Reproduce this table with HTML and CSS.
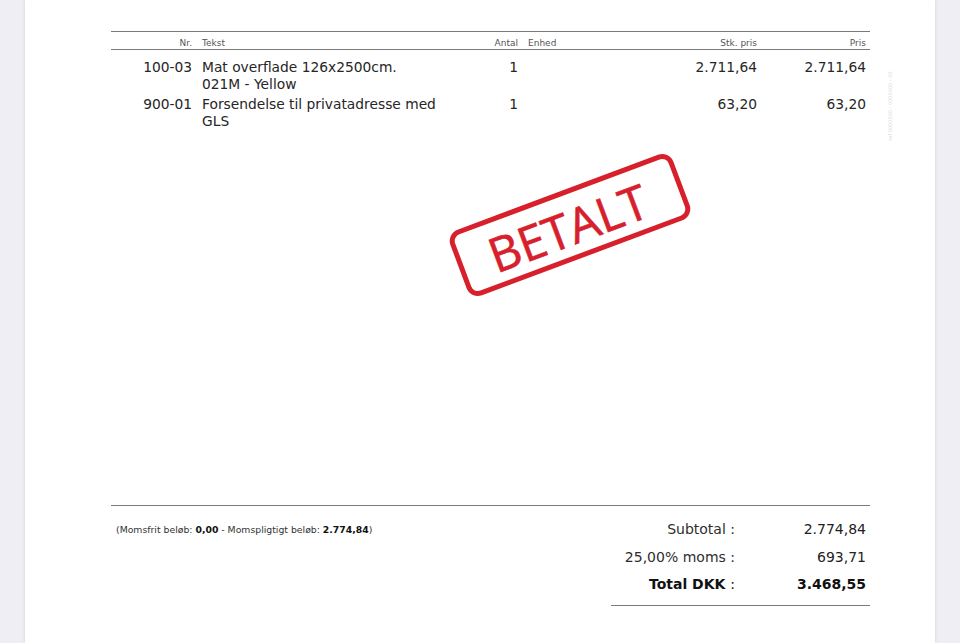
FILE: index.html
```html
<!DOCTYPE html>
<html lang="da">
<head>
<meta charset="utf-8">
<title>Faktura</title>
<link rel="stylesheet" href="styles.css">
</head>
<body>
<div class="page">
  <div class="items">
    <div class="row head">
      <div class="c-nr">Nr.</div>
      <div class="c-text">Tekst</div>
      <div class="c-qty">Antal</div>
      <div class="c-unit">Enhed</div>
      <div class="c-price">Stk. pris</div>
      <div class="c-total">Pris</div>
    </div>
    <div class="row item">
      <div class="c-nr">100-03</div>
      <div class="c-text">Mat overflade 126x2500cm.<br>021M - Yellow</div>
      <div class="c-qty">1</div>
      <div class="c-unit"></div>
      <div class="c-price">2.711,64</div>
      <div class="c-total">2.711,64</div>
    </div>
    <div class="row item">
      <div class="c-nr">900-01</div>
      <div class="c-text">Forsendelse til privatadresse med<br>GLS</div>
      <div class="c-qty">1</div>
      <div class="c-unit"></div>
      <div class="c-price">63,20</div>
      <div class="c-total">63,20</div>
    </div>
  </div>

  <div class="summary">
    <div class="note">(Momsfrit beløb: <b>0,00</b> - Momspligtigt beløb: <b>2.774,84</b>)</div>
    <div class="totals">
      <div class="t-label">Subtotal :</div><div class="t-value">2.774,84</div>
      <div class="t-label">25,00% moms :</div><div class="t-value">693,71</div>
      <div class="t-label strong">Total DKK <span class="colon">:</span></div><div class="t-value strong">3.468,55</div>
    </div>
  </div>

  <div class="stamp"><span>BETALT</span></div>
  <div class="sidecode">ref 0000000 - 0000000 - 00</div>
</div>
</body>
</html>
```

FILE: styles.css
```css
* { box-sizing: border-box; }

html, body {
  margin: 0;
  padding: 0;
  height: 643px;
  overflow: hidden;
}

body {
  background: #efeef4;
  font-family: "DejaVu Sans", Verdana, sans-serif;
  color: #262626;
}

.page {
  position: relative;
  margin: 0 25px;
  height: 643px;
  background: #ffffff;
  box-shadow: 0 0 3px rgba(0, 0, 0, 0.12);
  padding: 31px 65px 37px 86px;
  display: flex;
  flex-direction: column;
}

.items {
  border-top: 1px solid #7a7a7a;
}

.row {
  display: grid;
  grid-template-columns: 81px 278px 48px 132px 107px 109px;
  padding-right: 4px;
}

.head {
  font-size: 9px;
  color: #555;
  height: 18px;
  padding-top: 4px;
  line-height: 14px;
  border-bottom: 1px solid #7a7a7a;
}

.item {
  font-size: 13.8px;
  line-height: 17px;
}

.head + .item { padding-top: 9px; }
.item + .item { padding-top: 3px; }

.c-nr { text-align: right; }
.c-text { padding-left: 10px; white-space: nowrap; }
.c-qty { text-align: right; }
.c-unit { padding-left: 10px; }
.c-price { text-align: right; }
.c-total { text-align: right; }

.summary {
  margin-top: auto;
  border-top: 1px solid #7a7a7a;
  display: flex;
  justify-content: space-between;
  align-items: flex-start;
  padding-top: 10px;
}

.note {
  font-size: 9.3px;
  color: #333;
  padding-left: 5px;
  line-height: 27px;
}

.note b { color: #111; }

.totals {
  width: 259px;
  display: grid;
  grid-template-columns: 124px 131px;
  padding-right: 4px;
  padding-bottom: 7px;
  border-bottom: 1px solid #7a7a7a;
  font-size: 14px;
  grid-auto-rows: 27.5px;
  align-items: center;
}

.t-label { text-align: right; color: #2e2e2e; white-space: nowrap; }
.t-value { text-align: right; color: #222; }
.strong { font-weight: bold; color: #111; }
.strong .colon { font-weight: normal; }

.stamp {
  position: absolute;
  left: 426px;
  top: 190px;
  width: 238px;
  height: 70px;
  border: 5px solid #d7202b;
  border-radius: 12px;
  transform: rotate(-20.5deg);
  display: flex;
  align-items: center;
  justify-content: center;
  color: #d7202b;
  font-family: "Open Sans", "Liberation Sans", sans-serif;
  font-size: 48px;
  font-weight: 500;
  letter-spacing: 0;
  -webkit-text-stroke: 0.6px #d7202b;
}

.stamp span {
  line-height: 1;
  margin-top: 4px;
  margin-left: -6px;
}

.sidecode {
  position: absolute;
  left: 830px;
  top: 103px;
  font-size: 5px;
  color: #d6d6d6;
  transform: rotate(-90deg);
  white-space: nowrap;
}
```
